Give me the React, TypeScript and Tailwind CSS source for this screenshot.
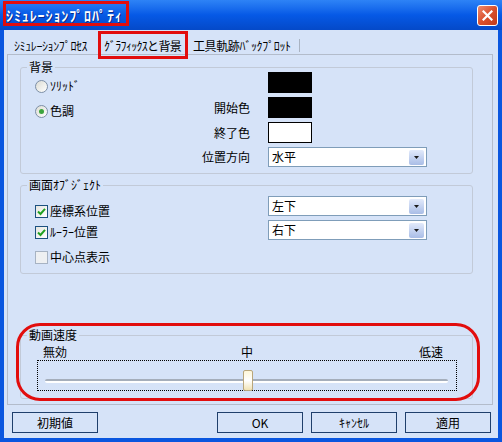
import { ReactNode } from "react";

const font = { fontFamily: '"Noto Sans CJK JP", "Liberation Sans", sans-serif' };

function Radio({ checked, label }: { checked?: boolean; label: string }) {
  return (
    <div className="flex h-[14px] items-center">
      <span className="flex h-[13px] w-[13px] items-center justify-center rounded-full border border-[#7d8fa6] bg-gradient-to-br from-[#dcdcd4] to-white">
        {checked && <span className="h-[5px] w-[5px] rounded-full bg-[#3ca43c]" />}
      </span>
      <span className="ml-[2px] leading-[14px]">{label}</span>
    </div>
  );
}

function Check({ checked, label, muted }: { checked?: boolean; label: string; muted?: boolean }) {
  return (
    <div className="flex h-[14px] items-center">
      <span
        className={
          "flex h-[13px] w-[13px] items-center justify-center border " +
          (muted ? "border-[#a7b3c3] bg-[#eef0f2]" : "border-[#1c5180] bg-gradient-to-br from-[#e6e6e0] to-white")
        }
      >
        {checked && (
          <svg width="9" height="9" viewBox="0 0 9 9">
            <path d="M1 4.5 L3.5 7 L8 1.8" fill="none" stroke="#21a121" strokeWidth="2" />
          </svg>
        )}
      </span>
      <span className="ml-[2px] leading-[14px]">{label}</span>
    </div>
  );
}

function Combo({ value }: { value: string }) {
  return (
    <div className="flex h-[20px] w-[159px] items-center border border-[#7f9db9] bg-white pr-[2px]">
      <span className="flex-1 pl-[3px] leading-[14px]">{value}</span>
      <span className="flex h-[15px] w-[15px] items-center justify-center rounded-[2px] bg-gradient-to-b from-[#e2eafb] to-[#a9bde6]">
        <svg width="5" height="3" viewBox="0 0 5 3">
          <path d="M0 0 H5 L2.5 3 Z" fill="#1b1b1b" />
        </svg>
      </span>
    </div>
  );
}

function Group({ title, className, children }: { title: string; className: string; children: ReactNode }) {
  return (
    <div className={"relative rounded-[3px] border border-[#c2cad8] " + className}>
      <span className="absolute -top-[8px] left-[6px] bg-[#d6e3f8] px-[2px] leading-[14px]">{title}</span>
      {children}
    </div>
  );
}

function Btn({ label }: { label: string }) {
  return (
    <button className="flex h-[21px] w-[86px] items-center justify-center border border-[#1f3f6c] bg-[#d6e3f8] leading-[14px] text-black">
      {label}
    </button>
  );
}

export default function App() {
  return (
    <div style={font} className="relative flex h-[442px] w-[502px] flex-col bg-[#0a56df] text-[12px] text-black">
      <div className="flex h-[30px] items-center bg-gradient-to-b from-[#2e83f6] via-[#0659e6] to-[#0449c8] pl-[6px] pr-[4px]">
        <span className="flex-1 text-[14px] font-bold tracking-[0.9px] text-white [text-shadow:1px_1px_0_#0a2a8a]">
          ｼﾐｭﾚｰｼｮﾝﾌﾟﾛﾊﾟﾃｨ
        </span>
        <span className="flex h-[21px] w-[21px] items-center justify-center rounded-[3px] border border-white bg-gradient-to-br from-[#ef8a6c] via-[#d9502d] to-[#c23a19]">
          <svg width="11" height="11" viewBox="0 0 11 11">
            <path d="M1.5 1.5 L9.5 9.5 M9.5 1.5 L1.5 9.5" stroke="white" strokeWidth="2.2" strokeLinecap="square" />
          </svg>
        </span>
      </div>

      <div className="relative mx-[4px] mb-[4px] flex flex-1 flex-col bg-[#d6e3f8]">
        <div className="flex h-[24px] items-end pb-[1px] pl-[10px] tracking-[-0.4px]">
          <span className="w-[90px] leading-[14px]">ｼﾐｭﾚｰｼｮﾝﾌﾟﾛｾｽ</span>
          <span className="w-[89px] leading-[14px] tracking-[-0.7px]">ｸﾞﾗﾌｨｯｸｽと背景</span>
          <span className="leading-[14px]">工具軌跡ﾊﾞｯｸﾌﾟﾛｯﾄ</span>
          <span className="mb-[1px] ml-[8px] h-[13px] w-px bg-[#a9b3c2]" />
        </div>

        <div className="ml-[3px] mr-[5px] flex h-[351px] flex-col border border-[#b3bccb] pl-[12px] pr-[19px] pt-[12px]">
          <Group title="背景" className="flex h-[107px] pl-[14px] pt-[4px]">
            <div className="flex w-[150px] flex-col gap-[11px] pt-[7px]">
              <Radio label="ｿﾘｯﾄﾞ" />
              <Radio checked label="色調" />
            </div>
            <div className="grid grid-cols-[65px_159px] grid-rows-[21px_21px_21px_20px] gap-x-[18px] gap-y-[4px]">
              <span />
              <span className="h-[21px] w-[44px] bg-black" />
              <span className="self-center text-right leading-[14px]">開始色</span>
              <span className="h-[21px] w-[44px] bg-black" />
              <span className="self-center text-right leading-[14px]">終了色</span>
              <span className="h-[21px] w-[44px] border border-black bg-white" />
              <span className="self-center text-right leading-[14px]">位置方向</span>
              <Combo value="水平" />
            </div>
          </Group>

          <Group title="画面ｵﾌﾞｼﾞｪｸﾄ" className="mt-[11px] flex h-[89px] pl-[14px]">
            <div className="flex w-[233px] flex-col pt-[18px]">
              <Check checked label="座標系位置" />
              <div className="mt-[7px]">
                <Check checked label="ﾙｰﾗｰ位置" />
              </div>
              <div className="mt-[11px]">
                <Check muted label="中心点表示" />
              </div>
            </div>
            <div className="flex flex-col gap-[4px] pt-[10px]">
              <Combo value="左下" />
              <Combo value="右下" />
            </div>
          </Group>

          <Group title="動画速度" className="mt-[61px] h-[64px] pl-[16px] pt-[9px]">
            <div className="flex w-[406px] pl-[6px] leading-[14px]">
              <span className="w-[198px]">無効</span>
              <span>中</span>
              <span className="flex-1 text-right">低速</span>
            </div>
            <div className="relative mt-[1px] h-[31px] w-[420px] border border-dotted border-black pl-[7px] pt-[18px]">
              <div className="h-[4px] w-[403px] rounded-[2px] border-t-2 border-[#a5aebb] bg-white" />
              <div className="absolute left-[205px] top-[9px] h-[21px] w-[10px] rounded-[2px] border border-[#b9a67c] bg-gradient-to-b from-[#fff7d8] via-white to-[#f1e3b4]" />
            </div>
          </Group>
        </div>

        <div className="mt-[7px] flex items-center pl-[8px] pr-[7px]">
          <Btn label="初期値" />
          <div className="flex-1" />
          <div className="flex gap-[8px]">
            <Btn label="OK" />
            <Btn label="ｷｬﾝｾﾙ" />
            <Btn label="適用" />
          </div>
        </div>

        <div className="pointer-events-none absolute left-[94px] top-[1px] h-[28px] w-[90px] border-[3px] border-[#e20d0d]" />
      </div>

      <div className="pointer-events-none absolute left-[3px] top-[1px] h-[25px] w-[126px] border-[3px] border-[#e20d0d]" />
      <div className="pointer-events-none absolute left-[16px] top-[323px] h-[78px] w-[464px] rounded-[24px] border-[3px] border-[#e20d0d]" />
    </div>
  );
}
